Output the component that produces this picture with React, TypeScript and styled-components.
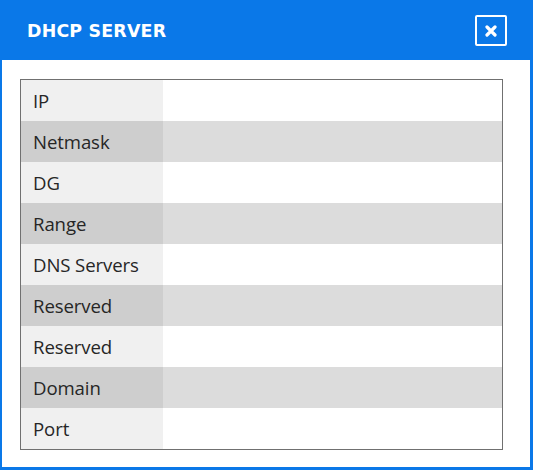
import styled, { createGlobalStyle } from "styled-components";

const GlobalStyle = createGlobalStyle`
  html, body {
    margin: 0;
    padding: 0;
    background: #ffffff;
  }
`;

const Window = styled.div`
  width: 533px;
  height: 470px;
  box-sizing: border-box;
  background-color: #0a78e8;
  padding: 0 3px 3px 2px;
  display: flex;
  flex-direction: column;
`;

const Header = styled.div`
  height: 60px;
  display: flex;
  align-items: center;
  justify-content: space-between;
  padding: 0 23px 0 25px;
  flex-shrink: 0;
`;

const Title = styled.h1`
  margin: 0;
  color: #ffffff;
  font-family: "DejaVu Sans", Verdana, sans-serif;
  font-weight: 700;
  font-size: 17.4px;
  letter-spacing: 0.2px;
  padding-top: 2px;
`;

const CloseButton = styled.button`
  width: 32px;
  height: 31px;
  box-sizing: border-box;
  border: 2px solid #ffffff;
  border-radius: 2px;
  background: transparent;
  padding: 0;
  display: flex;
  align-items: center;
  justify-content: center;
  margin-top: 1px;

  &:hover {
    cursor: pointer;
  }
`;

const Body = styled.div`
  flex: 1;
  background-color: #ffffff;
  padding: 19px 27px 0 18px;
`;

const Table = styled.div`
  border: 1px solid #707070;
  display: flex;
  flex-direction: column;
`;

const Row = styled.div<{ $shaded: boolean }>`
  display: grid;
  grid-template-columns: 142px 1fr;
  height: 41px;
  background-color: ${(p) => (p.$shaded ? "#dcdcdc" : "#ffffff")};
`;

const Label = styled.div<{ $shaded: boolean }>`
  background-color: ${(p) => (p.$shaded ? "#cecece" : "#f0f0f0")};
  color: #262626;
  font-family: "Open Sans", "Noto Sans", sans-serif;
  font-size: 18.6px;
  letter-spacing: -0.1px;
  display: flex;
  align-items: center;
  padding-left: 12px;
`;

const Value = styled.div``;

const fields = [
  "IP",
  "Netmask",
  "DG",
  "Range",
  "DNS Servers",
  "Reserved",
  "Reserved",
  "Domain",
  "Port",
];

export default function App() {
  return (
    <>
      <GlobalStyle />
      <Window>
        <Header>
          <Title>DHCP SERVER</Title>
          <CloseButton aria-label="Close">
            <svg width="12" height="12" viewBox="0 0 12 12">
              <path
                d="M2 2 L10 10 M10 2 L2 10"
                stroke="#ffffff"
                strokeWidth="3.2"
                strokeLinecap="round"
              />
            </svg>
          </CloseButton>
        </Header>
        <Body>
          <Table>
            {fields.map((f, i) => (
              <Row key={i} $shaded={i % 2 === 1}>
                <Label $shaded={i % 2 === 1}>{f}</Label>
                <Value />
              </Row>
            ))}
          </Table>
        </Body>
      </Window>
    </>
  );
}
